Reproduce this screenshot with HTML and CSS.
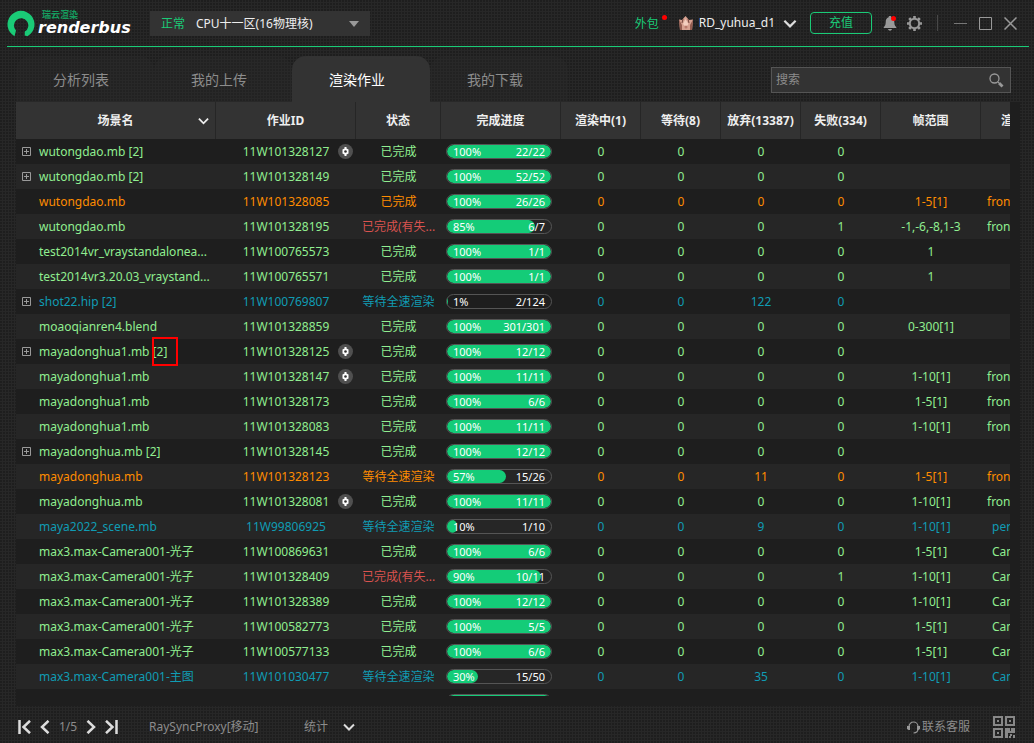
FILE: index.html
```
<!DOCTYPE html>
<html lang="zh-CN">
<head>
<meta charset="utf-8">
<title>Renderbus</title>
<link rel="stylesheet" href="styles.css">
</head>
<body>
<svg class="defs" aria-hidden="true">
  <symbol id="expand" viewBox="0 0 9 9"><path d="M.5.5h8v8h-8zM2 4.500h5M4.500 2v5" fill="none" stroke="#9a9a9a"/></symbol>
  <symbol id="chev" viewBox="0 0 12 8"><path d="M1 1.500 6 6.500 11 1.500" fill="none" stroke="currentColor" stroke-width="2"/></symbol>
  <symbol id="cog" viewBox="0 0 15 15"><circle cx="7.500" cy="7.500" r="7.500" fill="#505050"/><path d="M6.500 3h2v1.500l2 1v4l-2 1V12h-2v-1.500l-2-1v-4l2-1Z" fill="#fff"/><circle cx="7.500" cy="7.500" r="1.300" fill="#333"/></symbol>
</svg>
<header class="topbar">
  <div class="logo">
    <svg width="28" height="27" viewBox="0 0 28 27"><path d="M7.500 26.200A13.500 13.500 0 1 1 20.500 26.200L17.700 25.500 17.800 21.600A7.200 7.200 0 1 0 9 20.500Z" fill="#1acb77"/></svg>
    <div class="brand"><span class="brand-cn">瑞云渲染</span><span class="brand-en">renderbus</span></div>
  </div>
  <div class="platform">
    <label for="zone">正常</label>
    <select id="zone"><option>CPU十一区(16物理核)</option></select>
  </div>
  <div class="account">
    <a class="outsource" href="#">外包</a>
    <button class="user" type="button">
      <svg width="16" height="15" viewBox="0 0 16 15"><path d="M1 3.500 4 4 7.500 0 11 4 15 3.500 14 14H2Z" fill="#d8a292"/><path d="M1 3.500 4 9v5H2ZM15 3.500 12 9v5h2Z" fill="#945c50"/><path d="M5 8 7.500 3 10.500 8 8 11Z" fill="#f4cfc0"/><path d="M4 7 5 3M11 7 10 3" stroke="#74473f"/><circle cx="8" cy="11" r="1.500" fill="#b9796c"/></svg>
      RD_yuhua_d1
      <svg class="bright" width="14" height="9"><use href="#chev"/></svg>
    </button>
    <button class="recharge" type="button">充值</button>
    <button class="icon bell" type="button" aria-label="通知"><svg width="14" height="15" viewBox="0 0 14 15"><path d="M7 0c1 0 1.400.5 1.400 1.200C10.500 2 11.300 3.800 11.300 6c0 3 .8 4 2 5.300v.7H.7v-.7C2 10 2.700 9 2.700 6c0-2.200.8-4 2.900-4.800C5.600.5 6 0 7 0ZM5 13h4c-.3 1.200-1 1.700-2 1.700S5.300 14.200 5 13Z" fill="#999"/></svg></button>
    <button class="icon gear" type="button" aria-label="设置"><svg width="15" height="15" viewBox="0 0 15 15"><g fill="none" stroke="#999"><circle cx="7.500" cy="7.500" r="4.700" stroke-width="2"/><path d="M7.500 0v2.500M7.500 12.500V15M0 7.500h2.500M12.500 7.500H15M2.200 2.200 4 4M11 11l1.800 1.800M12.800 2.200 11 4M4 11l-1.800 1.800" stroke-width="2.600"/></g></svg></button>
    <span class="sep"></span>
    <button class="icon" type="button" aria-label="最小化"><svg width="13" height="13"><path d="M0 6.500h13" stroke="#777"/></svg></button>
    <button class="icon" type="button" aria-label="最大化"><svg width="13" height="13"><path d="M.5.5h12v12H.5z" fill="none" stroke="#999"/></svg></button>
    <button class="icon" type="button" aria-label="关闭"><svg width="13" height="13"><path d="m.5.5 12 12m0-12-12 12" stroke="#999" stroke-width="1.500"/></svg></button>
  </div>
</header>
<main>
  <div class="toolbar">
    <nav class="tabs">
      <button type="button">分析列表</button><button type="button">我的上传</button><button type="button" class="active">渲染作业</button><button type="button">我的下载</button>
    </nav>
    <div class="search">
      <input type="search" placeholder="搜索" aria-label="搜索">
      <svg width="15" height="15" viewBox="0 0 15 15"><circle cx="5.500" cy="5.500" r="4.500" fill="none" stroke="#999" stroke-width="1.300"/><path d="m8.500 8.500 2 2" stroke="#999"/><path d="m10 10 3.500 3.500" stroke="#999" stroke-width="2.800"/></svg>
    </div>
  </div>
  <div class="panel"><div class="viewport">
  <table>
    <colgroup><col class="w200"><col class="w140"><col class="w85"><col class="w120"><col class="w80"><col class="w80"><col class="w80"><col class="w80"><col class="w100"><col></colgroup>
    <thead><tr><th>场景名<svg class="sort" width="11" height="8"><use href="#chev"/></svg></th><th>作业ID</th><th>状态</th><th>完成进度</th><th>渲染中(1)</th><th>等待(8)</th><th>放弃(13387)</th><th>失败(334)</th><th>帧范围</th><th class="camera">渲染</th></tr></thead>
    <tbody>
    <tr><td><div class="name"><svg><use href="#expand"/></svg><span>wutongdao.mb [2]</span></div></td><td>11W101328127<svg class="cog"><use href="#cog"/></svg></td><td>已完成</td><td><div class="bar"><i style="width:100%"></i><b>100%</b><b>22/22</b></div></td><td>0</td><td>0</td><td>0</td><td>0</td><td></td><td></td></tr>
    <tr><td><div class="name"><svg><use href="#expand"/></svg><span>wutongdao.mb [2]</span></div></td><td>11W101328149</td><td>已完成</td><td><div class="bar"><i style="width:100%"></i><b>100%</b><b>52/52</b></div></td><td>0</td><td>0</td><td>0</td><td>0</td><td></td><td></td></tr>
    <tr class="orange"><td><div class="name"><span>wutongdao.mb</span></div></td><td>11W101328085</td><td>已完成</td><td><div class="bar"><i style="width:100%"></i><b>100%</b><b>26/26</b></div></td><td>0</td><td>0</td><td>0</td><td>0</td><td>1-5[1]</td><td class="view">front</td></tr>
    <tr><td><div class="name"><span>wutongdao.mb</span></div></td><td>11W101328195</td><td class="failed">已完成(有失...</td><td><div class="bar"><i style="width:85%"></i><b>85%</b><b>6/7</b></div></td><td>0</td><td>0</td><td>0</td><td>1</td><td>-1,-6,-8,1-3</td><td class="view">front</td></tr>
    <tr><td><div class="name"><span>test2014vr_vraystandalonea...</span></div></td><td>11W100765573</td><td>已完成</td><td><div class="bar"><i style="width:100%"></i><b>100%</b><b>1/1</b></div></td><td>0</td><td>0</td><td>0</td><td>0</td><td>1</td><td></td></tr>
    <tr><td><div class="name"><span>test2014vr3.20.03_vraystand...</span></div></td><td>11W100765571</td><td>已完成</td><td><div class="bar"><i style="width:100%"></i><b>100%</b><b>1/1</b></div></td><td>0</td><td>0</td><td>0</td><td>0</td><td>1</td><td></td></tr>
    <tr class="blue"><td><div class="name"><svg><use href="#expand"/></svg><span>shot22.hip [2]</span></div></td><td>11W100769807</td><td>等待全速渲染</td><td><div class="bar"><i style="width:1%"></i><b>1%</b><b>2/124</b></div></td><td>0</td><td>0</td><td>122</td><td>0</td><td></td><td></td></tr>
    <tr><td><div class="name"><span>moaoqianren4.blend</span></div></td><td>11W101328859</td><td>已完成</td><td><div class="bar"><i style="width:100%"></i><b>100%</b><b>301/301</b></div></td><td>0</td><td>0</td><td>0</td><td>0</td><td>0-300[1]</td><td></td></tr>
    <tr><td><div class="name"><svg><use href="#expand"/></svg><span>mayadonghua1.mb <span class="marked">[2]</span></span></div></td><td>11W101328125<svg class="cog"><use href="#cog"/></svg></td><td>已完成</td><td><div class="bar"><i style="width:100%"></i><b>100%</b><b>12/12</b></div></td><td>0</td><td>0</td><td>0</td><td>0</td><td></td><td></td></tr>
    <tr><td><div class="name"><span>mayadonghua1.mb</span></div></td><td>11W101328147<svg class="cog"><use href="#cog"/></svg></td><td>已完成</td><td><div class="bar"><i style="width:100%"></i><b>100%</b><b>11/11</b></div></td><td>0</td><td>0</td><td>0</td><td>0</td><td>1-10[1]</td><td class="view">front</td></tr>
    <tr><td><div class="name"><span>mayadonghua1.mb</span></div></td><td>11W101328173</td><td>已完成</td><td><div class="bar"><i style="width:100%"></i><b>100%</b><b>6/6</b></div></td><td>0</td><td>0</td><td>0</td><td>0</td><td>1-5[1]</td><td class="view">front</td></tr>
    <tr><td><div class="name"><span>mayadonghua1.mb</span></div></td><td>11W101328083</td><td>已完成</td><td><div class="bar"><i style="width:100%"></i><b>100%</b><b>11/11</b></div></td><td>0</td><td>0</td><td>0</td><td>0</td><td>1-10[1]</td><td class="view">front</td></tr>
    <tr><td><div class="name"><svg><use href="#expand"/></svg><span>mayadonghua.mb [2]</span></div></td><td>11W101328145</td><td>已完成</td><td><div class="bar"><i style="width:100%"></i><b>100%</b><b>12/12</b></div></td><td>0</td><td>0</td><td>0</td><td>0</td><td></td><td></td></tr>
    <tr class="orange"><td><div class="name"><span>mayadonghua.mb</span></div></td><td>11W101328123</td><td>等待全速渲染</td><td><div class="bar"><i style="width:57%"></i><b>57%</b><b>15/26</b></div></td><td>0</td><td>0</td><td>11</td><td>0</td><td>1-5[1]</td><td class="view">front</td></tr>
    <tr><td><div class="name"><span>mayadonghua.mb</span></div></td><td>11W101328081<svg class="cog"><use href="#cog"/></svg></td><td>已完成</td><td><div class="bar"><i style="width:100%"></i><b>100%</b><b>11/11</b></div></td><td>0</td><td>0</td><td>0</td><td>0</td><td>1-10[1]</td><td class="view">front</td></tr>
    <tr class="blue"><td><div class="name"><span>maya2022_scene.mb</span></div></td><td>11W99806925</td><td>等待全速渲染</td><td><div class="bar"><i style="width:10%"></i><b>10%</b><b>1/10</b></div></td><td>0</td><td>0</td><td>9</td><td>0</td><td>1-10[1]</td><td class="camera">persp</td></tr>
    <tr><td><div class="name"><span>max3.max-Camera001-光子</span></div></td><td>11W100869631</td><td>已完成</td><td><div class="bar"><i style="width:100%"></i><b>100%</b><b>6/6</b></div></td><td>0</td><td>0</td><td>0</td><td>0</td><td>1-5[1]</td><td class="camera">Camera001</td></tr>
    <tr><td><div class="name"><span>max3.max-Camera001-光子</span></div></td><td>11W101328409</td><td class="failed">已完成(有失...</td><td><div class="bar"><i style="width:90%"></i><b>90%</b><b>10/11</b></div></td><td>0</td><td>0</td><td>0</td><td>1</td><td>1-10[1]</td><td class="camera">Camera001</td></tr>
    <tr><td><div class="name"><span>max3.max-Camera001-光子</span></div></td><td>11W101328389</td><td>已完成</td><td><div class="bar"><i style="width:100%"></i><b>100%</b><b>12/12</b></div></td><td>0</td><td>0</td><td>0</td><td>0</td><td>1-10[1]</td><td class="camera">Camera001</td></tr>
    <tr><td><div class="name"><span>max3.max-Camera001-光子</span></div></td><td>11W100582773</td><td>已完成</td><td><div class="bar"><i style="width:100%"></i><b>100%</b><b>5/5</b></div></td><td>0</td><td>0</td><td>0</td><td>0</td><td>1-5[1]</td><td class="camera">Camera001</td></tr>
    <tr><td><div class="name"><span>max3.max-Camera001-光子</span></div></td><td>11W100577133</td><td>已完成</td><td><div class="bar"><i style="width:100%"></i><b>100%</b><b>6/6</b></div></td><td>0</td><td>0</td><td>0</td><td>0</td><td>1-5[1]</td><td class="camera">Camera001</td></tr>
    <tr class="blue"><td><div class="name"><span>max3.max-Camera001-主图</span></div></td><td>11W101030477</td><td>等待全速渲染</td><td><div class="bar"><i style="width:30%"></i><b>30%</b><b>15/50</b></div></td><td>0</td><td>0</td><td>35</td><td>0</td><td>1-10[1]</td><td class="camera">Camera001</td></tr>
    <tr><td></td><td></td><td></td><td><div class="bar"><i style="width:100%"></i></div></td><td></td><td></td><td></td><td></td><td></td><td></td></tr>
    </tbody>
  </table>
  </div></div>
</main>
<footer>
  <div class="pager">
    <button class="icon" type="button" aria-label="首页"><svg width="13" height="14"><path d="M1.500 0v14M12 .8 5.500 7l6.500 6.200" fill="none" stroke="#ddd" stroke-width="2.500"/></svg></button>
    <button class="icon" type="button" aria-label="上一页"><svg width="10" height="14"><path d="M8.500.8 2 7l6.500 6.200" fill="none" stroke="#ddd" stroke-width="2.500"/></svg></button>
    <span>1/5</span>
    <button class="icon" type="button" aria-label="下一页"><svg width="10" height="14"><path d="M1.500.8 8 7l-6.500 6.200" fill="none" stroke="#ddd" stroke-width="2.500"/></svg></button>
    <button class="icon" type="button" aria-label="末页"><svg width="13" height="14"><path d="M11.500 0v14M1 .8 7.500 7 1 13.200" fill="none" stroke="#ddd" stroke-width="2.500"/></svg></button>
  </div>
  <span class="proxy">RaySyncProxy[移动]</span>
  <button class="stats" type="button">统计<svg class="bright" width="12" height="8"><use href="#chev"/></svg></button>
  <a class="support" href="#"><svg width="13" height="13" viewBox="0 0 13 13"><path d="M2 8V5.500a4.500 4.500 0 0 1 9 0V8c0 2.500-2 3.800-4.500 4" fill="none" stroke="#999" stroke-width="1.200"/><path d="M0 5h3v4H1.500L0 8ZM10 5h3v3l-1.500 1H10Z" fill="#999"/></svg>联系客服</a>
  <button class="icon qr" type="button" aria-label="二维码"><svg width="22" height="22"><path d="M1 1h8v8H1zM13 1h8v8h-8zM1 13h8v8H1z" fill="none" stroke="#888" stroke-width="2"/><path d="M4 4h2v2H4zM16 4h2v2h-2zM4 16h2v2H4zM12 12h5v4h-2v6h-3zM18 12h4v5h-7v-2h3zM17 18h2v2h-2zM16 20h2v2h-2zM20 19h2v3h-2z" fill="#888"/></svg></button>
</footer>
</body>
</html>
```
FILE: styles.css
```
* { box-sizing: border-box; }
body {
  margin: 0;
  height: 100vh;
  display: flex;
  flex-direction: column;
  overflow: hidden;
  background: #272727 radial-gradient(circle at 1px 1px, #1e1e1e 1px, transparent 1px) 0 0 / 3px 3px;
  color: #999;
  font: 12px/16px "Noto Sans", "Noto Sans CJK SC", sans-serif;
}
button, input, select { font: inherit; color: inherit; background: none; border: 0; padding: 0; margin: 0; }
a { color: inherit; text-decoration: none; }
svg { display: block; flex: none; }
.defs { position: absolute; width: 0; height: 0; }
.bright { color: #ddd; }

.topbar {
  flex: none;
  height: 47px;
  margin: 0 5px 0 7px;
  border-bottom: 1px solid #1acb77;
  display: flex;
  align-items: center;
}
.logo { display: flex; align-items: center; gap: 3px; width: 143px; }
.brand { display: flex; flex-direction: column; }
.brand-cn { padding-left: 4px; color: #159c5e; font-size: 9px; line-height: 10px; font-weight: 700; }
.brand-en { color: #fff; font: italic 700 16px/16px "DejaVu Sans", sans-serif; }
.platform { display: flex; align-items: center; width: 220px; height: 25px; padding: 1px 11px 0; background: #333; }
.platform label { width: 35px; color: #1acb77; }
.platform select { flex: 1; height: 24px; appearance: none; color: #eee; outline: 0; }
.platform::after { content: ""; border: 5px solid transparent; border-top: 6px solid #999; border-bottom: 0; }
.account { margin-left: auto; display: flex; align-items: center; padding-right: 12px; }
.outsource { position: relative; color: #1acb77; margin-right: 19px; padding-top: 1px; }
.outsource::after, .bell::after { content: ""; position: absolute; width: 5px; height: 5px; border-radius: 50%; background: #f00; }
.outsource::after { right: -8px; top: 0; }
.user { display: flex; align-items: center; gap: 5px; color: #eee; margin-right: 13px; }
.user .bright { margin-left: 3px; }
.recharge { width: 62px; height: 22px; border: 1px solid #1acb77; border-radius: 4px; color: #1acb77; margin-right: 11px; }
.bell { position: relative; margin-right: 10px; }
.bell::after { right: 1px; top: 0; }
.gear { margin-right: 15px; }
.sep { width: 1px; height: 16px; margin-right: 4px; background: #484848; }
.sep ~ .icon { margin-left: 12px; }

main { flex: 1; min-height: 0; display: flex; flex-direction: column; padding: 9px 14px 0 16px; }
.toolbar { flex: none; display: flex; justify-content: space-between; padding-right: 9px; }
.tabs { display: flex; }
.tabs button { width: 138px; height: 46px; border-radius: 14px 14px 0 0; padding: 2px 8px 0 0; background: #2a2a2a55; font-size: 14px; color: #8c8c8c; }
.tabs .active { background: #333; color: #fff; }
.search { display: flex; align-items: center; width: 240px; height: 26px; margin-top: 11px; padding: 0 6px 0 4px; border: 1px solid #555; background: #333; }
.search input { flex: 1; min-width: 0; outline: 0; }
.search input::placeholder { color: #8c8c8c; }

.panel { flex: 1; min-height: 0; display: flex; padding: 0 10px 10px 0; background: #1e1e1e; }
.viewport { flex: 1; min-width: 0; overflow: hidden; }
table { width: 100%; min-width: 1055px; table-layout: fixed; border-collapse: separate; border-spacing: 0; color: #90ee90; }
.w200 { width: 200px; }
.w140 { width: 140px; }
.w120 { width: 120px; }
.w100 { width: 100px; }
.w85 { width: 85px; }
.w80 { width: 80px; }
th, td { padding: 0; text-align: center; white-space: nowrap; position: relative; }
th { height: 37px; background: #333; border-right: 1px solid #262626; color: #eee; font-weight: 700; }
td { height: 25px; }
tbody tr:nth-child(even) { background: #262626; }
.sort { position: absolute; right: 6px; top: 15px; }
.orange { color: #ff8c00; }
.blue { color: #109cb4; }
.failed { color: #d9534f; }
th.camera { text-align: left; padding-left: 20px; }
td.camera { text-align: left; padding-left: 11px; }
.view { text-align: left; padding-left: 6px; }
.name { display: flex; align-items: center; padding-left: 6px; }
.name svg { width: 9px; height: 9px; }
.name > span { margin-left: 8px; }
.name > span:first-child { margin-left: 17px; }
.marked { position: relative; }
.marked::after { content: ""; position: absolute; inset: -6px -11px -6px -1px; border: 2px solid #f00; }
.cog { position: absolute; right: 3px; top: 5px; width: 15px; height: 15px; }
.bar {
  position: relative;
  display: flex;
  justify-content: space-between;
  height: 15px;
  margin: 0 9px 0 5px;
  padding: 0 6px;
  border: 1px solid #555;
  border-radius: 8px;
  overflow: hidden;
  color: #fff;
  font-size: 11px;
  line-height: 13px;
}
.bar i { position: absolute; left: 0; top: 0; bottom: 0; border-radius: 7px; background: #14cc78; }
.bar b { position: relative; font-weight: 400; }

footer { flex: none; display: flex; align-items: center; height: 37px; padding: 5px 19px 0 18px; color: #8c8c8c; }
.pager { display: flex; align-items: center; gap: 9px; width: 131px; }
.proxy { width: 155px; }
.stats { display: flex; align-items: center; gap: 15px; }
.support { display: flex; align-items: center; gap: 2px; margin-left: auto; margin-right: 23px; }
```
